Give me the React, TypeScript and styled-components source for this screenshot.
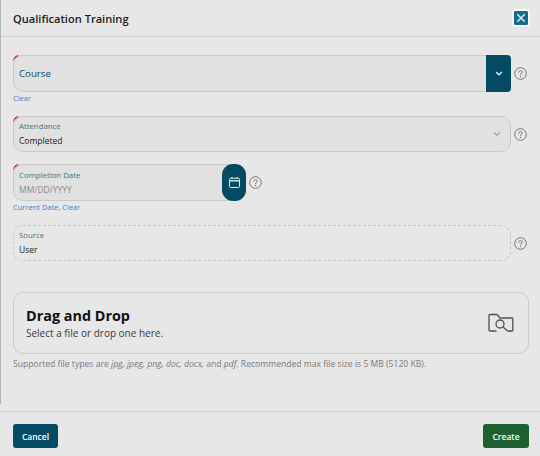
import React from "react";
import styled, { createGlobalStyle } from "styled-components";

const Global = createGlobalStyle`
  html, body { margin: 0; padding: 0; background: #e7e7e7; }
  body { font-family: "Open Sans", "Noto Sans", "Liberation Sans", sans-serif; }
`;

const Dialog = styled.div`
  position: relative;
  width: 540px;
  height: 456px;
  box-sizing: border-box;
  display: flex;
  flex-direction: column;
  background: #e7e7e7;
  overflow: hidden;
`;

const EdgeShadow = styled.span`
  position: absolute;
  left: 0;
  top: 0;
  width: 1px;
  height: 404px;
  background: #b4b4b4;
`;

const Header = styled.header`
  height: 37px;
  box-sizing: border-box;
  flex: none;
  display: flex;
  align-items: center;
  justify-content: space-between;
  padding: 0 12px 0 13px;
  border-bottom: 1px solid #d0d0d0;
`;

const Title = styled.h1`
  margin: 0;
  font-size: 11.1px;
  font-weight: 600;
  color: #1c1c1c;
`;

const CloseButton = styled.button`
  width: 14px;
  height: 14px;
  padding: 0;
  border: 0;
  border-radius: 1px;
  background: #146c8e;
  outline: 2px solid #f6f6f6;
  display: flex;
  align-items: center;
  justify-content: center;
`;

const Body = styled.div`
  flex: 1;
  display: flex;
  flex-direction: column;
  padding: 18px 11px 0 13px;
`;

const Row = styled.div<{ $mt?: number }>`
  display: flex;
  align-items: center;
  gap: 3px;
  margin-top: ${(p) => p.$mt ?? 0}px;
`;

const Field = styled.div<{ $w: number; $h: number; $dashed?: boolean; $square?: boolean }>`
  position: relative;
  width: ${(p) => p.$w}px;
  height: ${(p) => p.$h}px;
  box-sizing: border-box;
  flex: none;
  display: flex;
  flex-direction: column;
  justify-content: center;
  padding: 0 5px;
  border-radius: ${(p) => (p.$square ? "10px 5px 5px 10px" : "10px")};
  border: 1px ${(p) => (p.$dashed ? "dashed #c6c6c6" : "solid #c9c9c9")};
  background: ${(p) => (p.$dashed ? "transparent" : "#e1e1e1")};
`;

const RequiredMark = styled.span`
  position: absolute;
  left: -1px;
  top: -1px;
  width: 6px;
  height: 6px;
  box-sizing: border-box;
  border-top: 2px solid #d8291d;
  border-left: 1px solid #d8291d;
  border-radius: 6px 0 0 0;
  clip-path: polygon(0 0, 100% 0, 0 100%);
`;

const BigPlaceholder = styled.span`
  font-size: 9.7px;
  color: #0f4a5e;
`;

const Label = styled.span`
  font-size: 7.8px;
  line-height: 11px;
  margin-top: 1.5px;
  color: #49707f;
`;

const Value = styled.span<{ $muted?: boolean }>`
  font-size: 8.5px;
  line-height: 14px;
  margin-top: 2px;
  color: ${(p) => (p.$muted ? "#8a8a8a" : "#1d1d1d")};
`;

const SelectAddon = styled.div`
  position: absolute;
  right: -1px;
  top: -1px;
  bottom: -1px;
  width: 25px;
  background: #054a63;
  border-radius: 0 4px 4px 0;
  display: flex;
  align-items: center;
  justify-content: center;
`;

const Chevron = styled.div`
  position: absolute;
  right: 9px;
  top: 50%;
  transform: translateY(-50%);
  display: flex;
`;

const DateAddon = styled.div`
  position: absolute;
  right: -1px;
  top: -1px;
  bottom: -1px;
  width: 24px;
  background: #054a63;
  border-radius: 11px;
  display: flex;
  align-items: center;
  justify-content: center;
`;

const HelpIcon = () => (
  <svg width="13" height="13" viewBox="0 0 13 13" fill="none" style={{ flex: "none" }}>
    <circle cx="6.5" cy="6.5" r="5.8" stroke="#6a6a6a" strokeWidth="0.9" />
    <path d="M4.8 5.2c0-1 .8-1.6 1.7-1.6s1.7.6 1.7 1.5c0 1.3-1.7 1.3-1.7 2.5" stroke="#6a6a6a" strokeWidth="0.9" strokeLinecap="round" />
    <circle cx="6.5" cy="9.4" r="0.55" fill="#6a6a6a" />
  </svg>
);

const Links = styled.div`
  font-size: 7.5px;
  line-height: 11px;
  color: #3f7fbf;
  margin-top: 1px;
`;

const DropZone = styled.div`
  height: 62px;
  margin-top: 31px;
  box-sizing: border-box;
  flex: none;
  display: flex;
  align-items: center;
  justify-content: space-between;
  padding: 0 14px 0 12px;
  border: 1px solid #cbcbcb;
  border-radius: 10px;
`;

const DropText = styled.div`
  display: flex;
  flex-direction: column;
`;

const DropTitle = styled.div`
  font-size: 14.4px;
  line-height: 19px;
  font-weight: 700;
  color: #111;
`;

const DropSub = styled.div`
  font-size: 10px;
  line-height: 14px;
  color: #3a3a3a;
  margin-top: 1px;
`;

const Hint = styled.p`
  margin: 5px 0 0;
  font-size: 8.6px;
  line-height: 11px;
  color: #7a7a7a;
  white-space: nowrap;
`;

const Footer = styled.footer`
  height: 45px;
  box-sizing: border-box;
  flex: none;
  display: flex;
  align-items: flex-start;
  justify-content: space-between;
  padding: 12px 11px 0 13px;
  border-top: 1px solid #d0d0d0;
`;

const Button = styled.button<{ $bg: string; $w: number }>`
  width: ${(p) => p.$w}px;
  height: 24px;
  padding: 0;
  border: 0;
  border-radius: 3px;
  background: ${(p) => p.$bg};
  color: #fff;
  font-family: inherit;
  font-size: 8.5px;
  font-weight: 600;
`;

const ChevronSvg = ({ color, w = 1.1 }: { color: string; w?: number }) => (
  <svg width="8" height="5" viewBox="0 0 9 6" fill="none">
    <path d="M1 1.2 4.5 4.6 8 1.2" stroke={color} strokeWidth={w} />
  </svg>
);

export default function App() {
  return (
    <Dialog>
      <Global />
      <EdgeShadow />
      <Header>
        <Title>Qualification Training</Title>
        <CloseButton aria-label="Close">
          <svg width="10" height="10" viewBox="0 0 10 10" fill="none">
            <path d="M1.300 1.300 8.700 8.700M8.700 1.300 1.300 8.700" stroke="#e4f0f4" strokeWidth="1.400" />
          </svg>
        </CloseButton>
      </Header>
      <Body>
        <Row>
          <Field $w={498} $h={37} $square>
            <RequiredMark />
            <BigPlaceholder>Course</BigPlaceholder>
            <SelectAddon>
              <ChevronSvg color="#e6eef1" w={1.6} />
            </SelectAddon>
          </Field>
          <HelpIcon />
        </Row>
        <Links>Clear</Links>
        <Row $mt={12}>
          <Field $w={498} $h={36}>
            <RequiredMark />
            <Label>Attendance</Label>
            <Value>Completed</Value>
            <Chevron>
              <ChevronSvg color="#6c6c6c" />
            </Chevron>
          </Field>
          <HelpIcon />
        </Row>
        <Row $mt={12}>
          <Field $w={233} $h={37}>
            <RequiredMark />
            <Label>Completion Date</Label>
            <Value $muted>MM/DD/YYYY</Value>
            <DateAddon>
              <svg width="13" height="13" viewBox="0 0 13 13" fill="none">
                <rect x="1.500" y="2.200" width="10" height="9.300" rx="1.200" stroke="#dfeaee" strokeWidth="1" />
                <path d="M1.500 4.800h10" stroke="#dfeaee" strokeWidth="1.400" />
                <path d="M4 1v2M9 1v2" stroke="#dfeaee" strokeWidth="1" />
              </svg>
            </DateAddon>
          </Field>
          <HelpIcon />
        </Row>
        <Links>Current Date, Clear</Links>
        <Row $mt={12}>
          <Field $w={498} $h={36} $dashed>
            <Label>Source</Label>
            <Value>User</Value>
          </Field>
          <HelpIcon />
        </Row>
        <DropZone>
          <DropText>
            <DropTitle>Drag and Drop</DropTitle>
            <DropSub>Select a file or drop one here.</DropSub>
          </DropText>
          <svg width="26" height="20" viewBox="0 0 26 20" fill="none">
            <path d="M8.500 18H2a1 1 0 0 1-1-1V2.200a.7.700 0 0 1 .7-.7H9l3 3.500h12a.8.800 0 0 1 .8.800V17.200a.8.800 0 0 1-.8.800h-4.500" stroke="#505050" strokeWidth="1.300" />
            <circle cx="12" cy="11" r="4" stroke="#505050" strokeWidth="1.300" />
            <path d="M15 14l4.500 4" stroke="#505050" strokeWidth="1.300" />
          </svg>
        </DropZone>
        <Hint>
          Supported file types are <i>jpg, jpeg, png, doc, docx,</i> and <i>pdf</i>. Recommended max file size is 5 MB (5120 KB).
        </Hint>
      </Body>
      <Footer>
        <Button $bg="#054a63" $w={45}>Cancel</Button>
        <Button $bg="#1d6130" $w={46}>Create</Button>
      </Footer>
    </Dialog>
  );
}
